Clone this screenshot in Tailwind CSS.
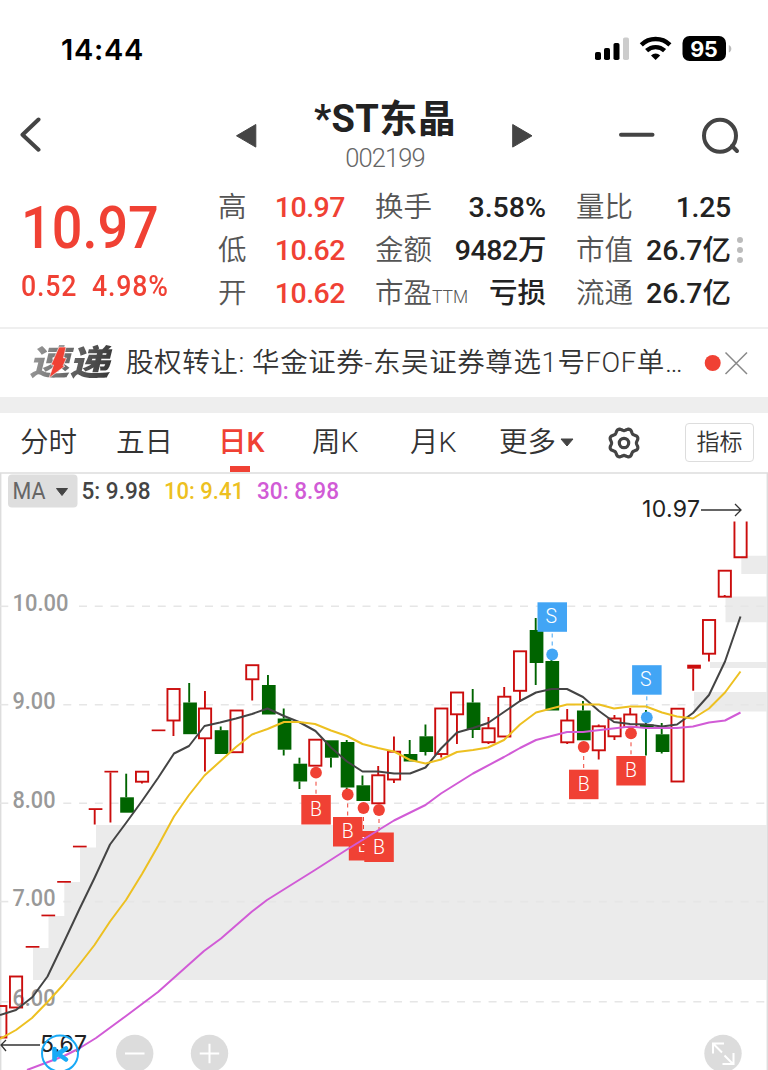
<!DOCTYPE html>
<html lang="zh-CN">

<head>
    <meta charset="UTF-8">
    <meta name="viewport" content="width=device-width, initial-scale=1.0">
    <title>*ST东晶 002199</title>
    <script src="https://cdn.jsdelivr.net/npm/@tailwindcss/browser@4"></script>
</head>

<body class="bg-white">
    <div class="w-[768px] h-[1070px] overflow-hidden flex flex-col bg-white text-[#222] font-[Roboto,'Noto_Sans_CJK_SC',sans-serif] whitespace-nowrap">
        <!-- status bar -->
        <div class="h-[90px] shrink-0 flex items-center justify-between pl-[61px] pr-9 pb-2 pt-4">
            <span class="font-[Inter,sans-serif] font-semibold text-[29px] text-black tracking-[0.7px] pt-0.5">14:44</span>
            <svg width="138" height="28" viewBox="594 35 138 28">
                <rect x="595" y="52" width="6" height="8" rx="1.8" />
                <rect x="604" y="48" width="6" height="12" rx="1.8" />
                <rect x="613.5" y="43" width="6" height="17" rx="1.8" />
                <rect x="623" y="37.5" width="6" height="22.5" rx="1.8" fill="#ccc" />
                <g fill="none" stroke="#000" stroke-width="4.4">
                    <path d="M641.3 44.8a20.5 20.5 0 0 1 28.6 0" />
                    <path d="M646.6 50.7a13 13 0 0 1 18 0" />
                </g>
                <path d="M655.6 60l-4.6-4.6a6.7 6.7 0 0 1 9.2 0z" />
                <rect x="682.5" y="36" width="43.5" height="25" rx="7" />
                <path d="M728.8 45c3.4 1.4 3.4 6.2 0 7.6z" fill="#bbb" />
                <text x="704" y="56.5" text-anchor="middle" fill="#fff" font-family="Inter, sans-serif" font-weight="700" font-size="21.5">95</text>
            </svg>
        </div>
        <!-- title -->
        <div class="h-[90px] shrink-0 flex items-center justify-between pl-5 pr-7">
            <svg width="240" height="40" viewBox="20 115 240 40">
                <path d="M38.5 119.5L22.5 134.7l16 15" fill="none" stroke="#444" stroke-width="4" stroke-linecap="round" stroke-linejoin="round" />
                <path d="M236.5 135.8L255.8 124.5v22.6z" fill="#444" stroke="#444" stroke-linejoin="round" />
            </svg>
            <div class="flex flex-col items-center w-[146px] pb-[3px]">
                <h1 class="font-bold text-[38px] leading-[46px] pt-0.5 tracking-[0.4px]">*ST东晶</h1>
                <p class="text-[#666] text-[25.5px] leading-8 font-light tracking-[-0.9px]">002199</p>
            </div>
            <svg width="230" height="40" viewBox="510 115 230 40">
                <path d="M532 135.8L512.7 124.5v22.6z" fill="#444" stroke="#444" stroke-linejoin="round" />
                <g fill="none" stroke="#444" stroke-width="4" stroke-linecap="round">
                    <path d="M621 134.8h31.5" />
                    <circle cx="720" cy="135.8" r="16" />
                    <path d="M732 146l5 5" />
                </g>
            </svg>
        </div>
        <!-- quote -->
        <div class="h-[149px] shrink-0 flex border-b-2 border-[#efefef] pt-1.5">
            <div class="w-[218px] pl-[21px] text-[#f04134] font-medium">
                <p class="text-[60px] leading-[60px] pt-3 origin-left scale-x-[.9]">10.97</p>
                <p class="text-[29px] leading-9 pt-2.5 origin-left scale-x-[.92] tracking-[0.9px]">0.52<span class="pl-4">4.98%</span></p>
            </div>
            <div class="grid grid-cols-[28px_99px_88px_113px_88px_97px] auto-rows-[43px] leading-[44px] text-[28.5px]">
                <span class="text-[#555] font-[350]">高</span>
                <span class="text-right font-medium text-[#f04134] tracking-[-0.5px]">10.97</span>
                <span class="text-[#555] font-[350] pl-[30px]">换手</span>
                <span class="text-right font-medium">3.58%</span>
                <span class="text-[#555] font-[350] pl-[30px]">量比</span>
                <span class="text-right font-medium tracking-[-0.3px]">1.25</span>
                <span class="text-[#555] font-[350]">低</span>
                <span class="text-right font-medium text-[#f04134] tracking-[-0.5px]">10.62</span>
                <span class="text-[#555] font-[350] pl-[30px]">金额</span>
                <span class="text-right font-medium tracking-[-0.4px]">9482万</span>
                <span class="text-[#555] font-[350] pl-[30px]">市值</span>
                <span class="text-right font-medium">26.7亿</span>
                <span class="text-[#555] font-[350]">开</span>
                <span class="text-right font-medium text-[#f04134] tracking-[-0.5px]">10.62</span>
                <span class="text-[#555] font-[350] pl-[30px]">市盈<span class="text-[17.5px]">TTM</span></span>
                <span class="text-right font-medium">亏损</span>
                <span class="text-[#555] font-[350] pl-[30px]">流通</span>
                <span class="text-right font-medium">26.7亿</span>
            </div>
            <div class="flex flex-col gap-1 pt-[51px] pl-[6px]">
                <i class="size-1.5 rounded-full bg-[#bbb]"></i>
                <i class="size-1.5 rounded-full bg-[#bbb]"></i>
                <i class="size-1.5 rounded-full bg-[#bbb]"></i>
            </div>
        </div>
        <!-- news -->
        <div class="h-[68px] shrink-0 flex items-center pl-[30px] pr-5">
            <div class="relative w-[96px] flex items-center">
                <span class="font-black text-[38px] leading-[48px] origin-left scale-x-[1.06] scale-y-[.92] -skew-x-12 pl-0.5 pr-1 bg-linear-to-r from-[#999] to-[#333] bg-clip-text text-transparent">速递</span>
                <svg class="absolute left-[17px] top-[7px]" width="22" height="34" viewBox="0 0 22 34">
                    <path d="M12 1h7l-2.500 11h3l-3.500 8h2L2 32l4.500-13H4z" fill="#f04134" stroke="#fff" stroke-width=".6" />
                </svg>
            </div>
            <p class="text-[27.5px] font-[350] text-[#333] flex-1 tracking-[0.6px]">股权转让: 华金证券-东吴证券尊选1号FOF单…</p>
            <svg width="45" height="26" viewBox="703 349 45 26">
                <circle cx="712.7" cy="362" r="8" fill="#f04134" />
                <path d="M725.5 351.5l21.5 21.5M747 351.5L725.5 373" stroke="#888" stroke-width="1.5" />
            </svg>
        </div>
        <div class="h-4 shrink-0 bg-[#eee]"></div>
        <!-- tabs -->
        <div class="h-[59px] shrink-0 flex text-[28.5px] leading-[60px] text-[#333] font-[350]">
            <span class="w-24 pl-5">分时</span>
            <span class="w-[102px] pl-5">五日</span>
            <span class="relative w-[94px] pl-5 font-medium text-[#f04134]">日K<i class="absolute left-8 bottom-0 w-5 h-[6px] bg-[#f04134]"></i></span>
            <span class="w-[98px] pl-5">周K</span>
            <span class="w-[89px] pl-5">月K</span>
            <span class="w-[98px] pl-5 flex items-center gap-1">更多<svg width="14" height="9" viewBox="0 0 14 9"><path d="M1 1h12L7 8z" fill="#444" stroke="#444" stroke-linejoin="round" /></svg></span>
            <svg class="ml-[29px] mt-3" width="36" height="36" viewBox="-18 -18 36 36" fill="none" stroke="#444" stroke-width="3.2" stroke-linejoin="round">
                <path id="gear" />
                <circle r="4.7" />
            </svg>
            <span class="ml-[43px] mt-[10px] w-[69px] h-[39px] border border-[#ddd] rounded text-center text-[23px] leading-[37px]">指标</span>
        </div>
        <!-- k-line chart -->
        <svg width="768" height="598" viewBox="0 472 768 598" class="shrink-0">
            <path d="M.7 1070V473h766.600v597" fill="none" stroke="#ddd" stroke-width="1.4" />
            <rect x="8" y="474.5" width="69.5" height="33" rx="4" fill="#dedede" />
            <g font-family="Roboto, sans-serif" font-size="24">
                <text x="12.5" y="499" fill="#666" textLength="33" lengthAdjust="spacingAndGlyphs">MA</text>
                <path d="M56.5 488.5h11L62 495.5z" fill="#444" stroke="#444" stroke-linejoin="round" />
                <text x="81.5" y="498.5" fill="#444" font-weight="500" textLength="69" lengthAdjust="spacingAndGlyphs">5: 9.98</text>
                <text x="164" y="498.5" fill="#edc021" font-weight="500" textLength="80" lengthAdjust="spacingAndGlyphs">10: 9.41</text>
                <text x="257" y="498.5" fill="#d15bd6" font-weight="500" textLength="82" lengthAdjust="spacingAndGlyphs">30: 8.98</text>
            </g>
            <path d="M96 825H767V980H33V948H48.500V916H64.300V882H80V847.500H96zM741.300 555.700H767V574H741.300zM725.500 596.500H767V622.300H725.500zM710 662H767V668H710zM694 692H767V711.500H694z" fill="#ebebeb" />
            <g id="grid" stroke="#e6e6e6" stroke-width="1.6" stroke-dasharray="8 7.75"></g>
            <g id="axis" fill="#999" font-family="Roboto, sans-serif" font-size="23.5"></g>
            <g id="candles" stroke-width="1.9"></g>
            <g id="marks" font-family="Roboto, sans-serif" font-size="19.5" font-weight="300" text-anchor="middle"></g>
            <g fill="none" stroke-width="2" stroke-linejoin="round">
                <polyline stroke="#444" points="0,1015 16,1010 32.5,997 47.5,976.5 64,942 79,910 94.5,878 110,844.5 126,823 142,801 158,778 174,753.5 189,746 204.5,726 220,722.5 236,718.5 252,714 267.5,708.5 284,716 299,722 315.5,731 331,747.5 347,761.5 362.5,771.5 378,771.5 394,773.5 410,773.5 425.5,767.5 441,748.5 457,732.5 473,728 488,723 504,712 520,701 536,692.5 551.5,689 567,689 583,697 599,711 614,722 630,724 646,724.5 662,726.5 677,724.5 693,713 709,695 725,661.5 740.5,616.5" />
                <polyline stroke="#edc021" points="0,1039 16,1030 32,1018 47.5,1002 63,985 79,965 94.5,945 110,921.5 126,900 142,874 158,846 174,816.5 189,795 204.5,775.5 220,761.5 236,747 252,734.5 267.5,729 284,722 299,722 315,724 331,730.5 347,736 362.5,744 378,748 394,751.5 410,760 425.5,763.5 441,759.5 457,752 473,750 488,747.5 504,740 520,724.5 536,712.5 551.5,708.5 567,704.5 583,704.5 599,704.5 614,708.5 630,706.5 646,706.5 662,712.5 677,716.5 693,718.5 709,708.5 725,692.5 740.5,671.5" />
                <polyline stroke="#d15bd6" points="27,1070 64,1056 79,1048.5 96,1038 126,1016 158,992 204,951 221,938.5 252,911.5 267,900 315,870 347,849.5 394,820.5 425.5,805 441,793.5 473,773.5 504,757 520,748 536,740 567,732 583,732 630,726.5 646,728 677,728 693,726.5 709,722.5 725,720.5 740.5,712.5" />
            </g>
            <!-- high / low -->
            <g fill="none" stroke="#333" stroke-width="1.3">
                <path d="M701 510h40M735 504l6 6-6 6" />
                <path d="M40 1045H1M6 1040l-5 5 5 6" />
            </g>
            <text x="642" y="517" fill="#222" font-family="Inter, sans-serif" font-size="23" textLength="58">10.97</text>
            <text x="40" y="1052" fill="#222" font-family="Inter, sans-serif" font-size="23" textLength="47">5.67</text>
            <!-- floating buttons -->
            <g fill="none" stroke="#18aaf7">
                <circle cx="60" cy="1053.5" r="18" stroke-width="2" />
                <path d="M54.5 1049v10.500M66 1048.500l-11 7.500M59 1054.500l7 5" stroke-width="4.6" stroke-linecap="round" />
            </g>
            <g fill="#dcdcdc">
                <circle cx="134.7" cy="1053.5" r="18.7" />
                <circle cx="209.5" cy="1053.5" r="18.7" />
                <circle cx="723" cy="1053.5" r="18.7" />
            </g>
            <path d="M125 1053.5h19.5M199.700 1053.5h19.5M209.500 1043.8v19.5M713 1053.5v-10h11M714 1044.5l8 8M733.5 1053v11h-11M724.500 1055.500l8 8" fill="none" stroke="#fff" stroke-width="2" />
        </svg>
    </div>
    <script>
        // [type, high, top, bottom, low] r = hollow up, g = filled down, d = flat bar
        const candles = [
            ['r', 0, 1006, 1037.5, 0], ['r', 0, 976.5, 1007.5, 0], ['d', 0, 946, 947.7, 0], ['d', 0, 914.6, 916.3, 0],
            ['d', 0, 881, 882.7, 0], ['d', 0, 845.7, 847.4, 0], ['d', 0, 808.2, 810, 824.5], ['d', 0, 770.8, 772.5, 822.5],
            ['g', 773.7, 797.3, 812.7, 0], ['r', 0, 771.7, 781.7, 783.5], ['d', 0, 729.5, 731.2, 0], ['r', 0, 689, 720.5, 736],
            ['g', 683, 702.5, 734.2, 0], ['r', 691, 708.5, 738.3, 771.5], ['g', 726.5, 730.2, 754, 0], ['r', 0, 710.5, 752.2, 0],
            ['r', 0, 665.2, 679.3, 700.5], ['g', 675, 685, 714.5, 0], ['g', 708.5, 718.5, 749.7, 755.5], ['g', 757.7, 763.7, 781.5, 789],
            ['r', 0, 739.7, 765.7, 0], ['g', 0, 740.3, 757.7, 767.5], ['g', 740, 742, 787.5, 789], ['g', 775.5, 785.3, 801, 0],
            ['r', 766, 775.3, 803.3, 0], ['r', 736.5, 751.7, 779.5, 783], ['g', 740, 754, 761.5, 0], ['g', 724.5, 736.3, 752, 755.5],
            ['r', 0, 708.5, 754, 757.5], ['r', 0, 692.5, 714.3, 744], ['g', 689, 702.5, 730, 738], ['r', 717, 728.3, 742.2, 744],
            ['r', 687, 696.7, 736.5, 0], ['r', 0, 651.3, 690.8, 702], ['g', 618, 630, 663, 685], ['g', 657, 661, 710.5, 0],
            ['r', 709, 720.5, 742.3, 744], ['g', 701, 710.5, 740.3, 0], ['r', 724.5, 726.3, 750.3, 759.5], ['r', 715, 718.5, 736.3, 740],
            ['r', 708, 714.5, 727, 0], ['g', 710, 724.5, 727.5, 755.5], ['g', 723, 734.3, 752, 753.5], ['r', 0, 708.7, 781.5, 0],
            ['d', 0, 664.7, 668.7, 690.7], ['r', 0, 620, 653.7, 661.5], ['r', 0, 570.7, 596.7, 595], ['u', 0, 521.5, 557.3, 0]
        ];
        let out = '';
        candles.forEach(([type, high, top, bottom, low], i) => {
            const x = 0.2 + i * 15.75;
            const color = type === 'g' ? '#006400' : '#cb0d0d';
            if (high) out += `<path d="M${x} ${high}V${top}" stroke="${color}"/>`;
            if (low) out += `<path d="M${x} ${bottom}V${low}" stroke="${color}"/>`;
            if (type === 'r') out += `<rect x="${x - 6}" y="${top}" width="12.2" height="${bottom - top}" fill="none" stroke="${color}"/>`;
            else if (type === 'u') out += `<path d="M${x - 6} ${top}V${bottom}h12.2V${top}" fill="none" stroke="${color}"/>`;
            else out += `<rect x="${x - 6}" y="${top}" width="13.7" height="${bottom - top}" fill="${color}"/>`;
        });
        document.getElementById('candles').innerHTML = out;

        // price scale
        let grid = '', axis = '';
        [['10.00', 606.3], ['9.00', 704.7], ['8.00', 803.2], ['7.00', 901.6], ['6.00', 1001.8]].forEach(([label, y]) => {
            grid += `<path d="M.3 ${y}h8"/><path d="M${label.length > 4 ? 79 : 63.3} ${y}H767"/>`;
            axis += `<text x="12.5" y="${y + 4.5}" font-weight="500" textLength="${label.length > 4 ? 56 : 43}" lengthAdjust="spacingAndGlyphs">${label}</text>`;
        });
        document.getElementById('grid').innerHTML = grid;
        document.getElementById('axis').innerHTML = axis;

        // trades: letter, dot x, dot y, box top
        let marks = '';
        [['B', 316, 772.7, 795], ['B', 363.5, 808, 831], ['B', 347.7, 794.5, 817], ['B', 379, 810, 832.5],
         ['B', 583.7, 747, 769.7], ['B', 631, 733.3, 756], ['S', 552.2, 654.5, 602.3], ['S', 646.8, 717.3, 665.2]].forEach(([t, x, y, top]) => {
            const color = t === 'B' ? '#f04134' : '#42a5f5';
            const end = t === 'B' ? top : top + 29.5;
            marks += `<path d="M${x} ${y}V${end}" stroke="${color}" stroke-dasharray="4 4" stroke-dashoffset="-1"/>
                <circle cx="${x}" cy="${y}" r="5.9" fill="${color}"/>
                <rect x="${x - 14.7}" y="${top}" width="29.5" height="29.5" fill="${color}"/>
                <text x="${x - (t === 'S' ? 1 : 0)}" y="${top + 21}" fill="#fff">${t}</text>`;
        });
        document.getElementById('marks').innerHTML = marks;

        // eight-lobed settings outline
        let gear = '';
        for (let a = 0; a < 360; a += 4) {
            const r = 13.6 + 1.2 * Math.cos((a - 22.5) * 8 * Math.PI / 180);
            gear += `${a ? 'L' : 'M'}${(r * Math.cos(a * Math.PI / 180)).toFixed(2)} ${(r * Math.sin(a * Math.PI / 180)).toFixed(2)}`;
        }
        document.getElementById('gear').setAttribute('d', gear + 'z');
    </script>
</body>

</html>
